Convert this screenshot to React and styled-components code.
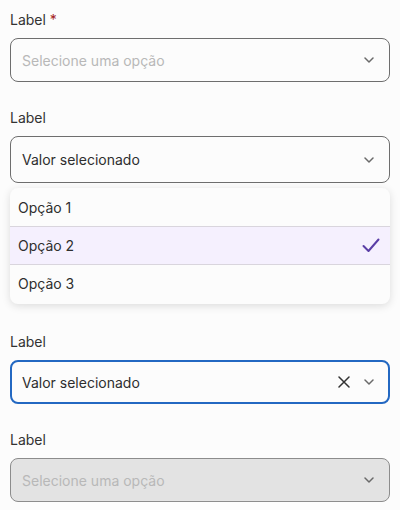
import React from 'react';
import styled, { createGlobalStyle, css } from 'styled-components';

const GlobalStyle = createGlobalStyle`
  * { box-sizing: border-box; }
  body {
    margin: 0;
    background: #fcfcfc;
    font-family: Inter, "Noto Sans", sans-serif;
    color: #2e2e2e;
  }
`;

const Page = styled.div`
  display: flex;
  flex-direction: column;
  padding: 10px 10px 0 10px;
  width: 400px;
`;

const Field = styled.div`
  display: flex;
  flex-direction: column;
  margin-bottom: 26px;
  &:last-child { margin-bottom: 0; }
`;

const Label = styled.label`
  font-size: 14px;
  line-height: 20px;
  color: #333;
  margin-bottom: 8px;

  .req {
    color: #a32424;
  }
`;

const Box = styled.div`
  display: flex;
  align-items: center;
  height: ${({ $tall }) => ($tall ? 47 : 44)}px;
  padding: 0 15px 0 11px;
  border: 1px solid #6e6e6e;
  border-radius: 8px;
  background: #fcfcfc;
  font-size: 14px;

  ${({ $focused }) =>
    $focused &&
    css`
      border: 2px solid #2368c2;
      padding: 0 14px 0 10px;
    `}

  ${({ $disabled }) =>
    $disabled &&
    css`
      background: #e3e3e3;
      border-color: #8c8c8c;
    `}
`;

const Value = styled.span`
  flex: 1;
  color: ${({ $placeholder }) => ($placeholder ? '#b8b8b8' : '#2e2e2e')};
`;

const Icons = styled.div`
  display: flex;
  align-items: center;
  gap: 14px;
`;

const Menu = styled.ul`
  list-style: none;
  margin: 5px 0 2px 0;
  padding: 0;
  background: #fcfcfc;
  border-radius: 8px;
  box-shadow: 0 2px 8px rgba(0, 0, 0, 0.13);
  overflow: hidden;
`;

const Option = styled.li`
  display: flex;
  align-items: center;
  justify-content: space-between;
  height: 38px;
  padding: 0 10px 0 8px;
  font-size: 14px;
  color: #2e2e2e;
  & + & { border-top: 1px solid #d9d5dd; }
  &:last-child { height: 40px; padding-bottom: 2px; }

  ${({ $selected }) =>
    $selected &&
    css`
      background: #f5f0fe;
    `}
`;

const Chevron = () => (
  <svg width="10" height="6" viewBox="0 0 10 6" fill="none">
    <path d="M1 1L5 5L9 1" stroke="#6a6a6a" strokeWidth="1.5" strokeLinecap="round" strokeLinejoin="round" />
  </svg>
);

const Clear = () => (
  <svg width="12" height="12" viewBox="0 0 12 12" fill="none">
    <path d="M1 1L11 11M11 1L1 11" stroke="#333" strokeWidth="1.5" strokeLinecap="round" />
  </svg>
);

const Check = () => (
  <svg width="18" height="15" viewBox="0 0 18 15" fill="none">
    <path d="M1.5 8L6.5 13L16.5 1.5" stroke="#5a3ea6" strokeWidth="2" strokeLinecap="round" strokeLinejoin="round" />
  </svg>
);

const options = ['Opção 1', 'Opção 2', 'Opção 3'];

export default function App() {
  return (
    <Page>
      <GlobalStyle />
      <Field>
        <Label>
          Label <span className="req">*</span>
        </Label>
        <Box>
          <Value $placeholder>Selecione uma opção</Value>
          <Chevron />
        </Box>
      </Field>

      <Field>
        <Label>Label</Label>
        <Box $tall>
          <Value>Valor selecionado</Value>
          <Chevron />
        </Box>
        <Menu>
          {options.map((o, i) => (
            <Option key={o} $selected={i === 1}>
              {o}
              {i === 1 && <Check />}
            </Option>
          ))}
        </Menu>
      </Field>

      <Field>
        <Label>Label</Label>
        <Box $focused>
          <Value>Valor selecionado</Value>
          <Icons>
            <Clear />
            <Chevron />
          </Icons>
        </Box>
      </Field>

      <Field>
        <Label>Label</Label>
        <Box $disabled>
          <Value $placeholder>Selecione uma opção</Value>
          <Chevron />
        </Box>
      </Field>
    </Page>
  );
}
